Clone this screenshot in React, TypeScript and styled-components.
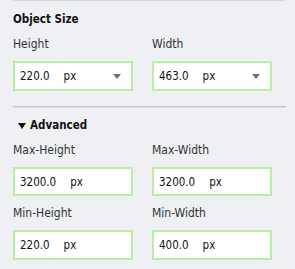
import { createGlobalStyle, styled } from 'styled-components';

const GlobalStyle = createGlobalStyle`
  html, body {
    margin: 0;
    padding: 0;
    background: #eef0f4;
  }
  body {
    font-family: "DejaVu Sans Condensed", "DejaVu Sans", Tahoma, sans-serif;
    font-size: 11px;
    color: #222;
  }
`;

const Panel = styled.div`
  width: 295px;
  height: 269px;
  box-sizing: border-box;
  padding: 0 9px 0 13px;
  background: #eef0f4;
  overflow: hidden;
`;

const TopRule = styled.div`
  height: 1px;
  margin-right: 1px;
  background: #d6d7dc;
`;

const Divider = styled.div`
  height: 1px;
  margin-top: 15px;
  border-bottom: 1px solid #dfe0e4;
  background: #c4c5ca;
`;

const SectionTitle = styled.div`
  font-weight: bold;
  font-size: 11.5px;
  line-height: 13px;
  color: #111;
  margin: 12px 0 12px;
`;

const Collapser = styled(SectionTitle)`
  display: flex;
  align-items: center;
  gap: 4px;
  padding-left: 5px;
  margin-top: 11px;
`;

const Caret = styled.span`
  width: 0;
  height: 0;
  border-left: 4px solid transparent;
  border-right: 4px solid transparent;
  border-top: 6px solid #111;
`;

const FieldGrid = styled.div`
  display: grid;
  grid-template-columns: 120px 120px;
  column-gap: 19px;
  row-gap: 11px;
`;

const Field = styled.div`
  display: flex;
  flex-direction: column;
`;

const Label = styled.div`
  font-size: 12px;
  line-height: 13px;
  color: #333;
  margin-bottom: 10px;
`;

const InputBox = styled.div<{ $tall?: boolean }>`
  box-sizing: border-box;
  height: ${(p) => (p.$tall ? 30 : 29)}px;
  display: flex;
  align-items: center;
  padding: 0 10px 0 5px;
  background: #fff;
  border: 2px solid #b7f0a0;
  color: #111;
  font-size: 11.5px;
`;

const Value = styled.span`
  margin-right: 14px;
`;

const Unit = styled.span`
  flex: 1;
`;

const DropArrow = styled.span`
  width: 0;
  height: 0;
  border-left: 4.5px solid transparent;
  border-right: 4.5px solid transparent;
  border-top: 5px solid #6b6e80;
`;

type FieldProps = { label: string; value: string; dropdown?: boolean; tall?: boolean };

const SizeField = ({ label, value, dropdown, tall }: FieldProps) => (
  <Field>
    <Label>{label}</Label>
    <InputBox $tall={tall}>
      <Value>{value}</Value>
      <Unit>px</Unit>
      {dropdown && <DropArrow />}
    </InputBox>
  </Field>
);

export default function App() {
  return (
    <Panel>
      <GlobalStyle />
      <TopRule />
      <SectionTitle>Object Size</SectionTitle>
      <FieldGrid>
        <SizeField label="Height" value="220.0" dropdown tall />
        <SizeField label="Width" value="463.0" dropdown tall />
      </FieldGrid>
      <Divider />
      <Collapser>
        <Caret />
        Advanced
      </Collapser>
      <FieldGrid>
        <SizeField label="Max-Height" value="3200.0" />
        <SizeField label="Max-Width" value="3200.0" />
        <SizeField label="Min-Height" value="220.0" tall />
        <SizeField label="Min-Width" value="400.0" tall />
      </FieldGrid>
    </Panel>
  );
}
